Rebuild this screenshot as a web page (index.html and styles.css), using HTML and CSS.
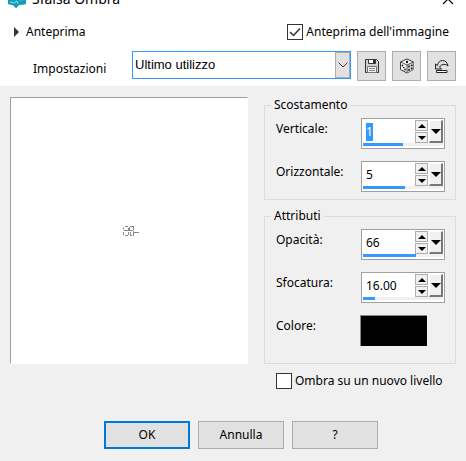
FILE: index.html
```
<!DOCTYPE html>
<html lang="it">
<head>
  <meta charset="UTF-8">
  <meta name="viewport" content="width=device-width, initial-scale=1.0">
  <title>Sfalsa Ombra</title>
  <link rel="stylesheet" href="styles.css">
</head>
<body>
  <header class="top">
    <div class="titlebar">
      <svg class="app-icon" width="20" height="18" viewBox="0 0 20 18">
        <path d="M1 2h18v12l-7 1-3 3-3-3-5-1z" fill="#20b2cc"/>
        <path d="M1 8l6 3 4-2 2 3 6-3v5l-7 1-3 3-3-3-5-1z" fill="#159ab8"/>
        <path d="M3 12l4 1 3-2 1 3" fill="none" stroke="#8fe3ef"/>
      </svg>
      <span class="title">Sfalsa Ombra</span>
      <button class="close" aria-label="Chiudi">
        <svg width="12" height="12" viewBox="0 0 12 12"><path d="M1 1l10 10M11 1L1 11" stroke="#000" stroke-width="1.2"/></svg>
      </button>
    </div>
    <div class="row preview-row">
      <button class="expander"><svg width="5" height="10" viewBox="0 0 5 10"><path d="M0 0l5 5-5 5z" fill="#333"/></svg>Anteprima</button>
      <label class="check"><input type="checkbox" checked>Anteprima dell'immagine</label>
    </div>
    <div class="row settings-row">
      <label class="settings-label" for="impostazioni">Impostazioni</label>
      <div class="combo">
        <select id="impostazioni"><option>Ultimo utilizzo</option></select>
        <span class="combo-arrow"><svg width="10" height="6" viewBox="0 0 10 6"><path d="M.5 .5L5 5 9.500 .5" fill="none" stroke="#444"/></svg></span>
      </div>
      <div class="tools">
        <button class="tool" aria-label="Salva">
          <svg width="16" height="16" viewBox="0 0 16 16">
            <path d="M1.500 1.500h11l2 2v11h-13z" fill="#d0d0d0" stroke="#333"/>
            <path d="M4.500 1.500h7v4h-7z" fill="#fff" stroke="#333"/>
            <path d="M9 2h2v3H9z" fill="#333"/>
            <path d="M3.500 8.500h9v6h-9z" fill="#f4f4f4" stroke="#777"/>
            <path d="M5 10.500h6M5 12.500h6" stroke="#888"/>
          </svg>
        </button>
        <button class="tool" aria-label="Valori casuali">
          <svg width="16" height="16" viewBox="0 0 16 16">
            <path d="M8 1l6.500 3v7.500L8 15l-6.500-3.500V4z" fill="#fff" stroke="#333" stroke-linejoin="round"/>
            <path d="M8 7l6.500-3v7.500L8 15z" fill="#ccc"/>
            <path d="M1.500 4L8 7l6.500-3M8 7v8" fill="none" stroke="#555"/>
            <g fill="#111"><circle cx="8" cy="4" r="1.200"/><circle cx="3.500" cy="7.500" r=".9"/><circle cx="6" cy="11.500" r=".9"/><circle cx="4.700" cy="9.500" r=".8"/><circle cx="10" cy="8.500" r=".9"/><circle cx="12.800" cy="7.300" r=".9"/><circle cx="10" cy="12" r=".9"/><circle cx="12.800" cy="10.500" r=".9"/></g>
          </svg>
        </button>
        <button class="tool" aria-label="Ripristina">
          <svg width="16" height="16" viewBox="0 0 16 16">
            <path d="M1.500 6v5h6l-2-1.800c1-2.200 3-3 5.500-2.700 1 .1 2 .6 3 1.500-.5-3.600-2.800-5.500-5.500-5.500-2.500 0-4.200 1.500-5.200 5z" fill="#ddd" stroke="#222" stroke-linejoin="round"/>
            <path d="M2.500 12.500h10.500v2H2.500z" fill="#fff" stroke="#222"/>
          </svg>
        </button>
      </div>
    </div>
  </header>

  <main class="content">
    <div class="preview">
      <svg width="18" height="12" viewBox="0 0 18 12" fill="none" stroke="#888">
        <path d="M3 1.500h3M1.500 2.500v2M2 5.500h9M6.500 3v3M8 1.500h3M7.500 2v3M11.500 1v4M1.500 7v3M3 10.500h3M6.500 7v3M8 10.500h2M8.500 7v3M11.500 6v5M11 7.500h6"/>
      </svg>
    </div>
    <div class="options">
      <fieldset class="group">
        <legend>Scostamento</legend>
        <div class="field">
          <label for="verticale">Verticale:</label>
          <div class="spin">
            <input type="text" id="verticale" value="1" size="1">
            <span class="bar"><span class="bar-fill" style="width: 40px"></span></span>
            <div class="arrows"><button class="up" aria-label="Aumenta"></button><button class="down" aria-label="Diminuisci"></button></div>
            <button class="drop" aria-label="Cursore"></button>
          </div>
        </div>
        <div class="field">
          <label for="orizzontale">Orizzontale:</label>
          <div class="spin">
            <input type="text" id="orizzontale" value="5" size="1">
            <span class="bar"><span class="bar-fill" style="width: 42px"></span></span>
            <div class="arrows"><button class="up" aria-label="Aumenta"></button><button class="down" aria-label="Diminuisci"></button></div>
            <button class="drop" aria-label="Cursore"></button>
          </div>
        </div>
      </fieldset>
      <fieldset class="group attributes">
        <legend>Attributi</legend>
        <div class="field">
          <label for="opacita">Opacità:</label>
          <div class="spin">
            <input type="text" id="opacita" value="66" size="1">
            <span class="bar"><span class="bar-fill" style="width: 53px"></span></span>
            <div class="arrows"><button class="up" aria-label="Aumenta"></button><button class="down" aria-label="Diminuisci"></button></div>
            <button class="drop" aria-label="Cursore"></button>
          </div>
        </div>
        <div class="field">
          <label for="sfocatura">Sfocatura:</label>
          <div class="spin">
            <input type="text" id="sfocatura" value="16.00" size="1">
            <span class="bar"><span class="bar-fill" style="width: 12px"></span></span>
            <div class="arrows"><button class="up" aria-label="Aumenta"></button><button class="down" aria-label="Diminuisci"></button></div>
            <button class="drop" aria-label="Cursore"></button>
          </div>
        </div>
        <div class="field">
          <label for="colore">Colore:</label>
          <button class="swatch" id="colore"></button>
        </div>
      </fieldset>
      <label class="check new-layer"><input type="checkbox">Ombra su un nuovo livello</label>
    </div>
  </main>

  <footer class="actions">
    <button class="btn default">OK</button>
    <button class="btn">Annulla</button>
    <button class="btn">?</button>
  </footer>

  <script>
    const primo = document.getElementById("verticale");
    primo.focus();
    primo.select();
  </script>
</body>
</html>
```

FILE: styles.css
```
* {
  box-sizing: border-box;
}
body {
  margin: 0;
  overflow: hidden;
  background: #f0f0f0;
  color: #000;
  font-family: "Noto Sans", "Open Sans", sans-serif;
  font-size: 12px;
  line-height: 18px;
}
button, input, select {
  margin: 0;
  padding: 0;
  font: inherit;
  color: inherit;
  border-radius: 0;
}
svg {
  display: block;
}
.top {
  display: flow-root;
  padding-bottom: 5px;
  background: #fff;
}
.titlebar {
  display: flex;
  align-items: center;
  height: 30px;
  margin-top: -16px;
  padding: 0 12px 0 7px;
}
.title {
  margin-left: 5px;
  font-size: 14px;
}
.close {
  margin-left: auto;
  border: 0;
  background: none;
}
.row {
  display: flex;
  align-items: center;
}
.preview-row {
  justify-content: space-between;
  height: 36px;
  padding: 0 17px 0 14px;
}
.expander {
  display: flex;
  align-items: center;
  gap: 7px;
  border: 0;
  background: none;
}
.check {
  display: flex;
  align-items: center;
  gap: 3px;
}
.check input {
  appearance: none;
  width: 16px;
  height: 16px;
  border: 1px solid #333;
  background: #fff;
}
.check input:checked {
  background: #fff url("data:image/svg+xml,%3Csvg xmlns='http://www.w3.org/2000/svg' viewBox='0 0 14 14'%3E%3Cpath d='M2 7l3.500 3.500L12 3.500' fill='none' stroke='%23333' stroke-width='1.500'/%3E%3C/svg%3E") center / 14px no-repeat;
}
.settings-row {
  align-items: flex-start;
  padding: 1px 10px 0 33px;
}
.settings-label {
  width: 99px;
  padding-top: 9px;
}
.combo {
  position: relative;
  flex: 1;
}
.combo select {
  appearance: none;
  display: block;
  width: 100%;
  height: 28px;
  padding-left: 2px;
  border: 1px solid #3399ff;
  background: #fff;
  font-family: "Liberation Sans", Arial, sans-serif;
  font-size: 13px;
}
.combo-arrow {
  position: absolute;
  top: 1px;
  right: 1px;
  bottom: 1px;
  display: flex;
  align-items: center;
  justify-content: center;
  width: 15px;
  border: 1px solid #adadad;
  background: #e1e1e1;
  pointer-events: none;
}
.tools {
  display: flex;
  gap: 6px;
  margin-left: 6px;
}
.tool {
  display: flex;
  align-items: center;
  justify-content: center;
  width: 29px;
  height: 30px;
  border: 1px solid #adadad;
  background: #e1e1e1;
}
.content {
  display: flex;
  gap: 16px;
  padding: 10px 10px 0;
}
.preview {
  display: flex;
  align-items: center;
  justify-content: center;
  flex: 1;
  margin: 1px 0 26px;
  padding-left: 4px;
  border: 1px solid #fff;
  border-top-color: #a0a0a0;
  border-left-color: #a0a0a0;
  background: #fff;
}
.options {
  width: 192px;
}
.group {
  display: grid;
  gap: 12px;
  min-width: 0;
  margin: 0 0 7px;
  padding: 4px 10px 7px 11px;
  border: 1px solid #dcdcdc;
}
.group legend {
  margin-left: -5px;
  padding: 0 3px;
}
.attributes {
  padding-bottom: 17px;
}
.field {
  display: flex;
  justify-content: space-between;
  height: 31px;
}
.field label {
  line-height: 22px;
}
.spin {
  display: grid;
  grid-template-columns: 1fr 13px 14px;
  grid-template-rows: 1fr 4px;
  column-gap: 1px;
  width: 84px;
  padding: 1px;
  border: 1px solid #a0a0a0;
  background: #fff;
}
.spin input {
  width: 100%;
  min-width: 0;
  padding: 1px 0 0 3px;
  border: 0;
  outline: none;
  background: none;
}
.spin input::selection {
  background: #3399ff;
  color: #fff;
}
.bar {
  grid-column: 1 / -1;
  grid-row: 2;
  height: 3px;
  background: #f0f0f0;
}
.bar-fill {
  display: block;
  height: 3px;
  background: #3399ff;
}
.arrows {
  grid-column: 2;
  grid-row: 1;
  display: flex;
  flex-direction: column;
  gap: 1px;
}
.arrows button {
  display: flex;
  align-items: center;
  justify-content: center;
  height: 11px;
  border: 1px solid #adadad;
  background: #f0f0f0;
}
.arrows button::before, .drop::before {
  content: "";
  border: 4px solid transparent;
}
.arrows .up::before {
  border-top: 0;
  border-bottom-color: #000;
}
.arrows .down::before, .drop::before {
  border-bottom: 0;
  border-top-color: #000;
}
.drop {
  grid-column: 3;
  grid-row: 1;
  display: flex;
  align-items: center;
  justify-content: center;
  border: 1px solid #fff;
  border-right: 2px solid #777;
  border-bottom: 2px solid #777;
  background: #f0f0f0;
}
.drop::before {
  border-width: 5px 5px 0;
}
.swatch {
  width: 67px;
  margin-right: 18px;
  border: 1px solid #888;
  border-right: 0;
  border-bottom: 0;
  background: #000;
}
.new-layer {
  margin-top: 8px;
  padding-left: 12px;
}
.actions {
  display: flex;
  justify-content: center;
  gap: 8px;
  padding: 31px 0 10px 16px;
}
.btn {
  width: 86px;
  height: 28px;
  border: 1px solid #adadad;
  background: #e1e1e1;
}
.default {
  border: 2px solid #0078d7;
}
```
